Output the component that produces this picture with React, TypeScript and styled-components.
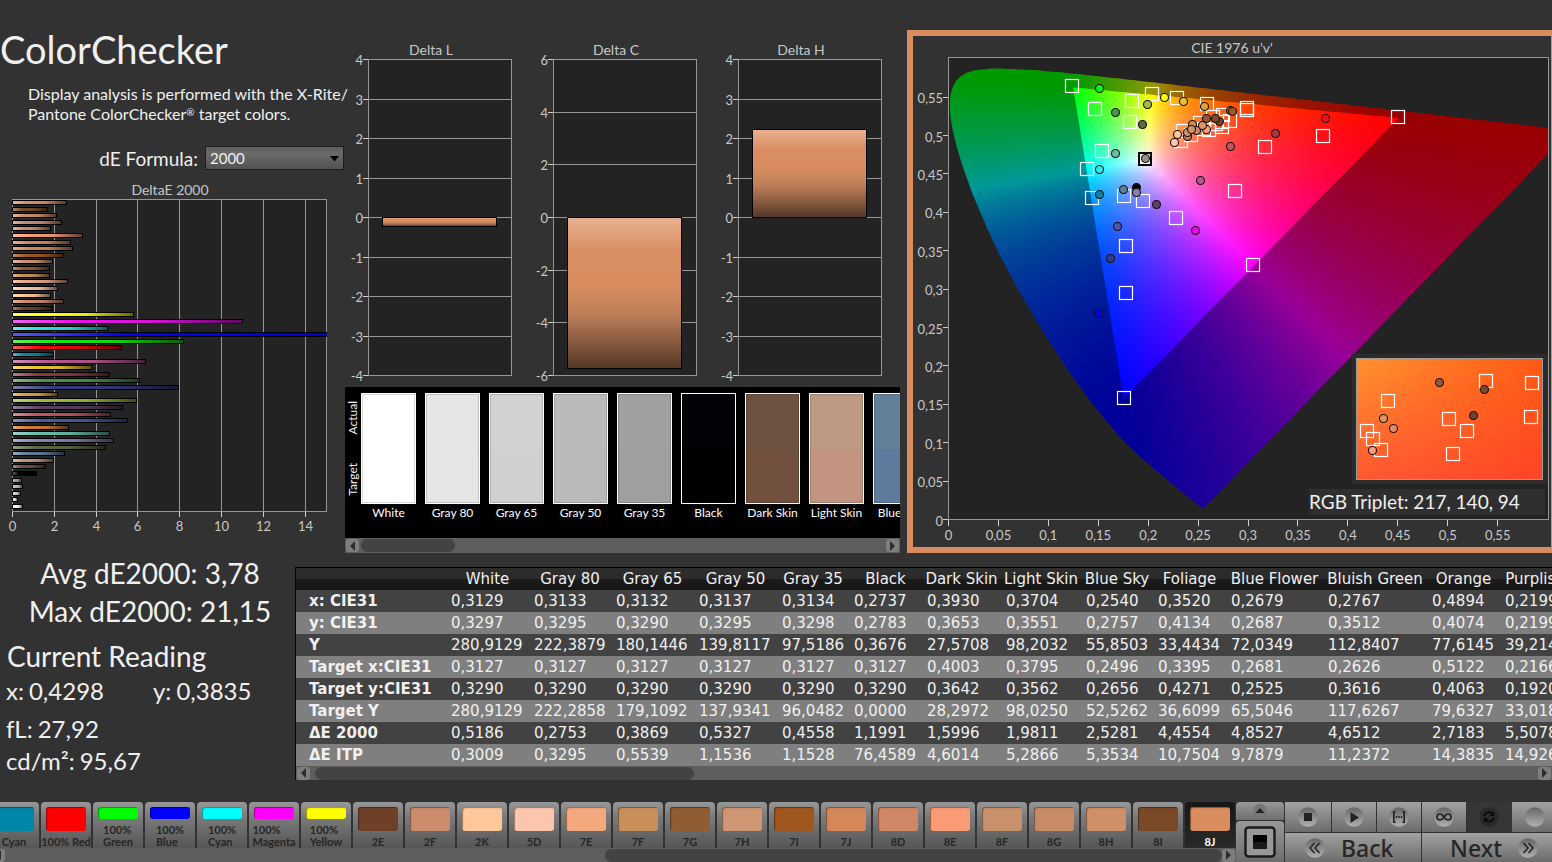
import React from 'react';
import styled, { createGlobalStyle, css } from 'styled-components';

const Global = createGlobalStyle`
  * { box-sizing: border-box; }
  body { margin: 0; background: #323232; color: #f0f0f0; font-family: Lato, "Open Sans", sans-serif; overflow: hidden; }
  h1, h2, p { margin: 0; font-weight: 400; }
  button { font-family: inherit; border: 0; padding: 0; margin: 0; }
`;

/* ---------- colour helpers ---------- */

const clamp = (n: number) => Math.max(0, Math.min(255, Math.round(n)));
const parse = (hex: string) => [1, 3, 5].map((i) => parseInt(hex.slice(i, i + 2), 16));
const mix = (hex: string, to: number, amount: number) =>
  `rgb(${parse(hex).map((c) => clamp(c + (to - c) * amount)).join(',')})`;

/* ---------- page layout ---------- */

const Page = styled.div`
  display: flex;
  flex-direction: column;
  min-height: 100vh;
  overflow: hidden;
`;

const Upper = styled.section`
  display: grid;
  grid-template-columns: 345px 555px minmax(0, 1fr);
  height: 553px;
`;

const Lower = styled.section`
  display: grid;
  grid-template-columns: 295px minmax(0, 1fr);
  flex: 1 0 auto;
`;

const Summary = styled.div`
  display: flex;
  flex-direction: column;
  padding-top: 26px;
`;

const Title = styled.h1`
  font-size: 38px;
  line-height: 46px;
  white-space: nowrap;
`;

const Description = styled.p`
  padding: 12px 0 0 28px;
  font-size: 16px;
  line-height: 20px;
  white-space: nowrap;
  sup { font-size: 10px; line-height: 0; vertical-align: 4px; }
`;

const FormulaRow = styled.div`
  display: flex;
  align-items: center;
  justify-content: flex-end;
  gap: 7px;
  height: 24px;
  margin: 22px 1px 0 0;
  label { font-size: 19px; }
`;

const SelectWrap = styled.div`
  position: relative;
  svg { position: absolute; right: 5px; top: 10px; pointer-events: none; }
`;

const FormulaSelect = styled.select`
  appearance: none;
  display: block;
  width: 139px;
  height: 24px;
  padding: 0 4px;
  border: 1px solid #1d1d1d;
  border-radius: 0;
  background: linear-gradient(#5e5e5e, #6a6a6a 30%, #525252);
  color: #f0f0f0;
  font: 15px Lato, sans-serif;
`;

const Middle = styled.div`
  display: flex;
  flex-direction: column;
  padding-top: 30px;
`;

const DeltaRow = styled.div`
  display: flex;
  height: 357px;
`;

const ChartSvg = styled.svg`
  display: block;
  overflow: hidden;
  text { fill: #c8c8c8; font-family: Lato, sans-serif; font-size: 13px; }
  .title { font-size: 14px; }
`;

/* ---------- delta E bar chart ---------- */

const deBars: [number, string][] = [
  [67, '#d98c6a'], [48, '#7a4a26'], [57, '#cf8f68'], [62, '#c48c76'], [51, '#c9906c'],
  [83, '#fa9b76'], [71, '#d08768'], [73, '#d6875a'], [64, '#a0561f'], [53, '#cf9673'],
  [50, '#8f5c34'], [50, '#c88f5a'], [68, '#e8a684'], [58, '#fcc6ac'], [51, '#ffc79a'],
  [64, '#cc8b6a'], [53, '#6e4028'], [134, '#ffff10'], [243, '#f010f0'], [108, '#30e0e0'],
  [454, '#0000ee'], [184, '#10e810'], [122, '#f00808'], [54, '#0a86a4'], [146, '#bb5595'],
  [92, '#ebc82e'], [110, '#8c3840'], [140, '#4a944a'], [179, '#343c80'], [58, '#e2a038'],
  [137, '#9fb840'], [123, '#5b3f68'], [111, '#c25464'], [128, '#4a5ba0'], [69, '#d87c34'],
  [110, '#66bfac'], [114, '#8583b1'], [106, '#5a6b42'], [65, '#5f7e9f'], [54, '#c49480'],
  [46, '#70503f'], [37, '#000000'], [22, '#a0a0a0'], [23, '#bababa'], [21, '#d0d0d0'],
  [18, '#e6e6e6'], [23, '#ffffff'],
];

function DeltaEChart() {
  const ticks = [0, 2, 4, 6, 8, 10, 12, 14];
  const px = (v: number) => Math.round(12 + v * 20.9) + 0.5;
  return (
    <ChartSvg width="345" height="370" viewBox="0 170 345 370">
      <defs>
        {deBars.map(([, c], i) => (
          <linearGradient id={`de${i}`} key={i}>
            <stop offset="0" stopColor={mix(c, 255, 0.35)} />
            <stop offset="0.25" stopColor={c} />
            <stop offset="0.6" stopColor={mix(c, 0, 0.08)} />
            <stop offset="1" stopColor={mix(c, 0, 0.6)} />
          </linearGradient>
        ))}
        <clipPath id="deClip"><rect x="12" y="199" width="315" height="312" /></clipPath>
      </defs>
      <text className="title" x="170" y="195" textAnchor="middle">DeltaE 2000</text>
      <rect x="12.5" y="199.5" width="314" height="312" fill="#232323" stroke="#969696" />
      {ticks.map((t) => (
        <g key={t}>
          <path d={`M${px(t)} 200V511`} stroke="#969696" />
          <path d={`M${px(t)} 512v5`} stroke="#d0d0d0" />
          <text x={px(t)} y="531" textAnchor="middle">{t}</text>
        </g>
      ))}
      <g clipPath="url(#deClip)" shapeRendering="crispEdges">
        {deBars.map(([end, ], i) => {
          const y = Math.round(200 + i * 6.61);
          return (
            <g key={i}>
              <rect x="12" y={y} width={end - 12} height="5" fill="#000" />
              <rect x="13" y={y + 1} width={end - 14} height="3" fill={`url(#de${i})`} />
            </g>
          );
        })}
      </g>
    </ChartSvg>
  );
}

/* ---------- delta L / C / H charts ---------- */

interface DeltaProps { name: string; max: number; step: number; top: number; bottom: number }

function DeltaChart({ name, max, step, top, bottom }: DeltaProps) {
  const values: number[] = [];
  for (let v = max; v >= -max; v -= step) values.push(v);
  const y = (v: number) => Math.round(217 - (v / max) * 158) + 0.5;
  const id = `delta${name}`;
  return (
    <ChartSvg width="185" height="357" viewBox="0 30 185 357">
      <defs>
        <linearGradient id={id} x2="0" y2="1">
          <stop offset="0" stopColor="#e8b292" />
          <stop offset="0.22" stopColor="#d98e62" />
          <stop offset="0.45" stopColor="#d88c5e" />
          <stop offset="0.65" stopColor="#bb7d58" />
          <stop offset="1" stopColor="#543626" />
        </linearGradient>
      </defs>
      <text className="title" x="86" y="55" textAnchor="middle">Delta {name}</text>
      <rect x="23.5" y="59.5" width="143" height="316" fill="#232323" />
      {values.map((v) => (
        <g key={v}>
          <path d={`M24 ${y(v)}H166`} stroke="#969696" />
          <path d={`M18 ${y(v)}h5`} stroke="#d0d0d0" />
          <text x="18" y={y(v) + 5} textAnchor="end">{v}</text>
        </g>
      ))}
      <rect x="23.5" y="59.5" width="143" height="316" fill="none" stroke="#969696" />
      <rect x="37.5" y={top + 0.5} width="114" height={bottom - top} fill={`url(#${id})`} stroke="#000" />
    </ChartSvg>
  );
}

/* ---------- swatch comparison strip ---------- */

const swatches = [
  ['White', '#ffffff', '#ffffff'], ['Gray 80', '#e6e5e6', '#e6e6e6'], ['Gray 65', '#d2d0d1', '#d0d0d0'],
  ['Gray 50', '#bcb9ba', '#bababa'], ['Gray 35', '#a0a0a0', '#9f9f9f'], ['Black', '#030307', '#000000'],
  ['Dark Skin', '#6e5241', '#725040'], ['Light Skin', '#bd9983', '#c39581'], ['Blue Sky', '#62809a', '#5e7a9c'],
];

const Compare = styled.div`
  display: flex;
  flex: 1;
  min-height: 0;
  overflow: hidden;
  background: #000;
`;

const SideLabels = styled.div`
  display: flex;
  flex-direction: column;
  justify-content: space-around;
  align-items: center;
  flex: 0 0 16px;
  height: 123px;
  font-size: 12px;
  span { writing-mode: vertical-rl; transform: rotate(180deg); line-height: 16px; }
`;

const SwatchList = styled.div`
  display: flex;
  gap: 9px;
  padding-top: 6px;
`;

const SwatchItem = styled.figure`
  flex: 0 0 55px;
  margin: 0;
  text-align: center;
  font-size: 12px;
  line-height: 18px;
  color: #fff;
  white-space: nowrap;
`;

const SwatchTile = styled.div<{ $actual: string; $target: string }>`
  height: 111px;
  border: 1px solid #fff;
  background: linear-gradient(${(p) => p.$actual} 50%, ${(p) => p.$target} 50%);
  box-shadow: inset 0 0 0 1px rgba(0, 0, 0, 0.15);
`;

/* ---------- scroll bars ---------- */

const ScrollTrack = styled.div<{ $h: number }>`
  display: flex;
  align-items: center;
  flex: 0 0 ${(p) => p.$h}px;
  height: ${(p) => p.$h}px;
  padding: 0 1px;
  background: #5e5e5e;
`;

const ScrollArrow = styled.button`
  display: flex;
  align-items: center;
  justify-content: center;
  flex: 0 0 13px;
  height: 13px;
  border-radius: 3px;
  background: #7e7e7e;
`;

const ScrollThumb = styled.div<{ $w: number; $lead?: number }>`
  flex: 0 1 ${(p) => p.$w}px;
  height: 13px;
  margin-left: ${(p) => p.$lead ?? 2}px;
  margin-right: auto;
  border-radius: 7px;
  background: #434343;
`;

const Arrow = ({ right }: { right?: boolean }) => (
  <ScrollArrow aria-label={right ? 'Scroll right' : 'Scroll left'}>
    <svg width="7" height="10" viewBox="0 0 7 10">
      <path d={right ? 'M1 0v10l5-5z' : 'M6 0v10l-5-5z'} fill="#2c2c2c" />
    </svg>
  </ScrollArrow>
);

function ScrollBar({ h, w, lead }: { h: number; w: number; lead?: number }) {
  return (
    <ScrollTrack $h={h}>
      <Arrow />
      <ScrollThumb $w={w} $lead={lead} />
      <Arrow right />
    </ScrollTrack>
  );
}

/* ---------- CIE 1976 chart ---------- */

const CiePanel = styled.div`
  margin: 30px 0 0 7px;
  border: 6px solid #d98c5e;
  border-right-width: 1px;
  overflow: hidden;
`;

const CieSvg = styled.svg`
  display: block;
  width: 100%;
  height: 511px;
  text { fill: #c8c8c8; font-family: Lato, sans-serif; font-size: 13px; }
  .title { font-size: 14px; }
  .triplet { fill: #f0f0f0; font-size: 19px; }
`;

const cx = (u: number) => 948.5 + u * 998.5;
const cy = (v: number) => 519.5 - v * 768;

const locusXy = [
  [0.1741, 0.005], [0.1714, 0.0051], [0.1644, 0.0109], [0.1566, 0.0177], [0.144, 0.0297],
  [0.1355, 0.0399], [0.1241, 0.0578], [0.1096, 0.0868], [0.0913, 0.1327], [0.0687, 0.2007],
  [0.0454, 0.295], [0.0235, 0.4127], [0.0082, 0.5384], [0.0039, 0.6548], [0.0139, 0.7502],
  [0.0389, 0.812], [0.0743, 0.8338], [0.1142, 0.8262], [0.1547, 0.8059], [0.2296, 0.7543],
  [0.3016, 0.6923], [0.3731, 0.6245], [0.4441, 0.5547], [0.5125, 0.4866], [0.5752, 0.4242],
  [0.627, 0.3725], [0.6915, 0.3083], [0.719, 0.2809], [0.7347, 0.2653],
];

const locusPath = (() => {
  const p = locusXy.map(([x, y]) => {
    const d = -2 * x + 12 * y + 3;
    return [cx((4 * x) / d), cy((9 * y) / d)];
  });
  let d = `M${p[0]}`;
  for (let i = 0; i < p.length - 1; i++) {
    const a = p[Math.max(0, i - 1)], b = p[i], c = p[i + 1], e = p[Math.min(p.length - 1, i + 2)];
    d += `C${b[0] + (c[0] - a[0]) / 6} ${b[1] + (c[1] - a[1]) / 6} ${c[0] - (e[0] - b[0]) / 6} ${c[1] - (e[1] - b[1]) / 6} ${c[0]} ${c[1]}`;
  }
  return `${d}Z`;
})();

/* Brightest displayable colour of a chromaticity, scaled by the given level. */
function chroma(px: number, py: number, level: number) {
  const u = (px - 948.5) / 998.5;
  const v = Math.max(0.01, (519.5 - py) / 768);
  const X = (9 * u) / (4 * v);
  const Z = (12 - 3 * u - 20 * v) / (4 * v);
  const lin = [
    3.2406 * X - 1.5372 - 0.4986 * Z,
    -0.9689 * X + 1.8758 + 0.0415 * Z,
    0.0557 * X - 0.204 + 1.057 * Z,
  ].map((c) => Math.max(0, c));
  const top = Math.max(...lin, 0.0001);
  return `rgb(${lin.map((c) => clamp((255 * level * c) / top)).join(',')})`;
}

function ColourField({ id, x0, x1, y0, y1, level }: { id: string; x0: number; x1: number; y0: number; y1: number; level: number }) {
  const strips = [];
  const n = Math.ceil((x1 - x0) / 10);
  for (let y = y0; y < y1; y += 2) {
    const stops = [];
    for (let i = 0; i <= n; i++) {
      stops.push(<stop key={i} offset={i / n} stopColor={chroma(x0 + ((x1 - x0) * i) / n, y + 1, level)} />);
    }
    strips.push(
      <g key={y}>
        <linearGradient id={`${id}${y}`}>{stops}</linearGradient>
        <rect x={x0} y={y} width={x1 - x0} height="3" fill={`url(#${id}${y})`} />
      </g>,
    );
  }
  return <g shapeRendering="crispEdges">{strips}</g>;
}

const targets = [
  [1072, 86], [1095, 109], [1132, 101], [1152, 94], [1177, 98], [1207, 104], [1130, 122], [1102, 151],
  [1087, 169], [1092, 198], [1124, 196], [1143, 201], [1176, 218], [1126, 246], [1126, 293], [1183, 131],
  [1181, 141], [1191, 135], [1200, 123], [1204, 129], [1213, 117], [1223, 115], [1209, 130], [1222, 127],
  [1222, 122], [1230, 121], [1216, 124], [1235, 191], [1247, 108], [1247, 110], [1265, 147], [1323, 136],
  [1398, 117], [1253, 265], [1124, 398],
];

const readings: [number, number, string][] = [
  [1099, 88, '#00f818'], [1115, 112, '#469449'], [1147, 104, '#9fbd40'], [1164, 97, '#ffff00'],
  [1183, 101, '#e8c22e'], [1204, 106, '#e2a02e'], [1142, 124, '#5a6b42'], [1115, 153, '#66bfac'],
  [1099, 169, '#20f0f0'], [1099, 194, '#0086a8'], [1123, 189, '#5f7e9f'], [1136, 187, '#000000'],
  [1136, 192, '#8583b1'], [1156, 204, '#5b3f68'], [1117, 226, '#4a5ba5'], [1110, 258, '#313b91'],
  [1098, 313, '#0000f0'], [1195, 230, '#f000f0'], [1200, 180, '#bb5295'], [1230, 146, '#c25462'],
  [1275, 133, '#a83840'], [1325, 118, '#f01010'], [1177, 134, '#ffc79a'], [1174, 142, '#ffc8b0'],
  [1187, 136, '#b98060'], [1187, 132, '#cf9673'], [1192, 124, '#c88f5a'], [1196, 130, '#c78b68'],
  [1191, 129, '#d0946c'], [1206, 129, '#f9a37e'], [1202, 125, '#e09468'], [1206, 118, '#8f5a34'],
  [1219, 121, '#6f432a'], [1215, 118, '#7a4a28'], [1230, 110, '#b0602c'], [1232, 111, '#a0561f'],
];

const insetTargets = [
  [1486, 381], [1532, 383], [1388, 401], [1449, 419], [1531, 417],
  [1467, 431], [1367, 431], [1373, 439], [1381, 450], [1453, 454],
];

const insetReadings: [number, number, string][] = [
  [1439, 382, '#8f5a34'], [1484, 389, '#7a4a28'], [1473, 415, '#6f432a'],
  [1383, 418, '#e0975f'], [1393, 428, '#e08e66'], [1372, 450, '#ff9f7d'],
];

const Target = ({ x, y, stroke = '#fff' }: { x: number; y: number; stroke?: string }) => (
  <rect x={x - 6.5} y={y - 6.5} width="13" height="13" fill="none" stroke={stroke} strokeWidth="1.2" />
);

const Reading = ({ x, y, fill }: { x: number; y: number; fill: string }) => (
  <circle cx={x + 0.5} cy={y + 0.5} r="4" fill={fill} stroke="#1c0c08" strokeWidth="1.1" />
);

const fmt = (n: number) => String(Math.round(n * 100) / 100).replace('.', ',');

function CieChart() {
  const steps = Array.from({ length: 12 }, (_, i) => i * 0.05);
  return (
    <CieSvg viewBox="913 36 638 511" preserveAspectRatio="xMinYMin meet">
      <defs>
        <clipPath id="plot"><rect x="949" y="58" width="599" height="462" /></clipPath>
        <clipPath id="locus" clipPath="url(#plot)"><path d={locusPath} /></clipPath>
        <clipPath id="gamut">
          <path d={`M${cx(0.4507)} ${cy(0.5229)}L${cx(0.125)} ${cy(0.5625)}L${cx(0.1754)} ${cy(0.1579)}Z`} />
        </clipPath>
        <linearGradient id="insetX">
          <stop offset="0" stopColor="#ff9232" />
          <stop offset="1" stopColor="#ff5a14" />
        </linearGradient>
        <linearGradient id="insetY" x2="0" y2="1">
          <stop offset="0" stopColor="#ff3c28" stopOpacity="0" />
          <stop offset="1" stopColor="#ff3832" stopOpacity="0.65" />
        </linearGradient>
      </defs>
      <text className="title" x="1232" y="53" textAnchor="middle">CIE 1976 u'v'</text>
      <rect x="948.5" y="57.5" width="600" height="462" fill="#232323" />
      <g clipPath="url(#locus)">
        <ColourField id="out" x0={948} x1={1548} y0={66} y1={512} level={0.6} />
      </g>
      <g clipPath="url(#gamut)">
        <ColourField id="in" x0={1070} x1={1400} y0={84} y1={402} level={1} />
      </g>
      <rect x="948.5" y="57.5" width="600" height="462" fill="none" stroke="#969696" />
      {steps.map((s) => (
        <g key={s}>
          <path d={`M${Math.round(cx(s) - 0.5) + 0.5} 520v6`} stroke="#d0d0d0" />
          <text x={cx(s)} y="540" textAnchor="middle">{fmt(s)}</text>
          <path d={`M943 ${Math.round(cy(s) - 0.5) + 0.5}h5`} stroke="#d0d0d0" />
          <text x="943" y={Math.round(cy(s)) + 6} textAnchor="end">{fmt(s)}</text>
        </g>
      ))}
      {targets.map(([x, y], i) => <Target key={i} x={x} y={y} />)}
      <rect x="1139" y="153" width="12" height="12" fill="none" stroke="#000" strokeWidth="2" />
      <rect x="1141" y="155" width="8" height="8" fill="none" stroke="#fff" />
      {readings.map(([x, y, c], i) => <Reading key={i} x={x} y={y} fill={c} />)}
      <Reading x={1145} y={158} fill="#8f8f8f" />

      <rect x="1352" y="354" width="196" height="130" fill="#2c2c2c" />
      <rect x="1356.5" y="358.5" width="186" height="121" fill="url(#insetX)" />
      <rect x="1356.5" y="358.5" width="186" height="121" fill="url(#insetY)" stroke="#a09a96" />
      {insetTargets.map(([x, y], i) => <Target key={i} x={x} y={y} />)}
      {insetReadings.map(([x, y, c], i) => <Reading key={i} x={x} y={y} fill={c} />)}
      <rect x="1309" y="489" width="236" height="26" fill="#2f2f2f" />
      <text className="triplet" x="1309" y="509">RGB Triplet: 217, 140, 94</text>
    </CieSvg>
  );
}

/* ---------- current reading ---------- */

const Readout = styled.div`
  display: flex;
  flex-direction: column;
  white-space: nowrap;
`;

const Totals = styled.div`
  padding: 1px 0 0 5px;
  text-align: center;
  font-size: 28px;
  line-height: 38px;
`;

const ReadingTitle = styled.h2`
  padding: 7px 0 0 7px;
  font-size: 28px;
  line-height: 38px;
`;

const ReadingLines = styled.dl`
  display: grid;
  grid-template-columns: 147px 1fr;
  margin: 0;
  padding: 0 0 0 6px;
  font-size: 24px;
  line-height: 32px;
  div { display: flex; gap: 5px; }
  div:nth-child(n + 3) { grid-column: 1 / -1; }
  div:nth-child(3) { padding-top: 6px; }
  dt, dd { margin: 0; }
`;

/* ---------- data table ---------- */

const columns: [string, number, string[]][] = [
  ['White', 83, ['0,3129', '0,3297', '280,9129', '0,3127', '0,3290', '280,9129', '0,5186', '0,3009']],
  ['Gray 80', 82, ['0,3133', '0,3295', '222,3879', '0,3127', '0,3290', '222,2858', '0,2753', '0,3295']],
  ['Gray 65', 83, ['0,3132', '0,3290', '180,1446', '0,3127', '0,3290', '179,1092', '0,3869', '0,5539']],
  ['Gray 50', 83, ['0,3137', '0,3295', '139,8117', '0,3127', '0,3290', '137,9341', '0,5327', '1,1536']],
  ['Gray 35', 72, ['0,3134', '0,3298', '97,5186', '0,3127', '0,3290', '96,0482', '0,4558', '1,1528']],
  ['Black', 73, ['0,2737', '0,2783', '0,3676', '0,3127', '0,3290', '0,0000', '1,1991', '76,4589']],
  ['Dark Skin', 79, ['0,3930', '0,3653', '27,5708', '0,4003', '0,3642', '28,2972', '1,5996', '4,6014']],
  ['Light Skin', 80, ['0,3704', '0,3551', '98,2032', '0,3795', '0,3562', '98,0250', '1,9811', '5,2866']],
  ['Blue Sky', 72, ['0,2540', '0,2757', '55,8503', '0,2496', '0,2656', '52,5262', '2,5281', '5,3534']],
  ['Foliage', 73, ['0,3520', '0,4134', '33,4434', '0,3395', '0,4271', '36,6099', '4,4554', '10,7504']],
  ['Blue Flower', 97, ['0,2679', '0,2687', '72,0349', '0,2681', '0,2525', '65,5046', '4,8527', '9,7879']],
  ['Bluish Green', 104, ['0,2767', '0,3512', '112,8407', '0,2626', '0,3616', '117,6267', '4,6512', '11,2372']],
  ['Orange', 73, ['0,4894', '0,4074', '77,6145', '0,5122', '0,4063', '79,6327', '2,7183', '14,3835']],
  ['Purplish Blue', 108, ['0,2199', '0,2199', '39,2144', '0,2166', '0,1920', '33,0180', '5,5078', '14,9260']],
];

const rowNames = ['x: CIE31', 'y: CIE31', 'Y', 'Target x:CIE31', 'Target y:CIE31', 'Target Y', 'ΔE 2000', 'ΔE ITP'];

const TableFrame = styled.div`
  align-self: start;
  margin-top: 14px;
  border-top: 1px solid #000;
  border-left: 1px solid #000;
  overflow: hidden;
`;

const DataTable = styled.table`
  table-layout: fixed;
  width: 1312px;
  border-collapse: collapse;
  font-family: "DejaVu Sans", sans-serif;
  font-size: 15px;
  white-space: nowrap;
  thead tr { background: linear-gradient(#2e2e2e, #2a2a2a 50%, #1c1c1c 50%, #141414); }
  th, td { padding: 0 5px; height: 22px; line-height: 20px; text-align: left; font-weight: 400; }
  thead th { padding: 0; text-align: center; }
  tbody th { padding-left: 13px; font-weight: 700; }
  tbody tr { background: #424242; }
  tbody tr:nth-child(even) { background: #7f7f7f; }
`;

/* ---------- bottom bar ---------- */

const BottomBar = styled.footer`
  display: flex;
  height: 60px;
  overflow: hidden;
`;

const StripArea = styled.div`
  display: flex;
  flex-direction: column;
  flex: 1;
  min-width: 0;
  overflow: hidden;
`;

const Strip = styled.div`
  display: flex;
  justify-content: flex-end;
  gap: 2px;
  height: 48px;
  padding-right: 1px;
`;

const StripScroll = styled.div`
  margin-left: -9px;
`;

const PatchButton = styled.button<{ $active?: boolean }>`
  display: flex;
  flex-direction: column;
  align-items: center;
  flex: 0 0 50px;
  padding-top: 5px;
  border-radius: 4px 4px 0 0;
  background: linear-gradient(#989898, #7c7c7c 30%, #565656);
  color: #262626;
  font-size: 11px;
  font-weight: 700;
  line-height: 12px;
  white-space: nowrap;
  ${(p) => p.$active && css`background: linear-gradient(#161616, #2a2a2a); color: #fff;`}
`;

const PatchColour = styled.span<{ $c: string; $small: boolean }>`
  flex: 0 0 auto;
  width: 40px;
  height: ${(p) => (p.$small ? 12 : 24)}px;
  margin-bottom: 5px;
  border-radius: 3px;
  background: ${(p) => p.$c};
  box-shadow: inset 1px 1px 1px rgba(0, 0, 0, 0.4);
`;

const patches: [string, string, string?][] = [
  ['Cyan', '#0086a8'], ['100% Red', '#ff0000'], ['100%', '#00ff00', 'Green'], ['100%', '#0000ff', 'Blue'],
  ['100%', '#00ffff', 'Cyan'], ['100%', '#ff00ff', 'Magenta'], ['100%', '#ffff00', 'Yellow'],
  ['2E', '#6e4028'], ['2F', '#cc8b6a'], ['2K', '#ffc79a'], ['5D', '#fcc6ac'], ['7E', '#f4a87e'],
  ['7F', '#c88f5a'], ['7G', '#8f5c34'], ['7H', '#cf9673'], ['7I', '#a0561f'], ['7J', '#d6875a'],
  ['8D', '#d08768'], ['8E', '#fa9b76'], ['8F', '#c9906c'], ['8G', '#c88b68'], ['8H', '#cf8f68'],
  ['8I', '#7a4a26'], ['8J', '#d98c5e'],
];

const PatchText = styled.span`
  text-align: left;
`;

const StopColumn = styled.div`
  display: flex;
  flex-direction: column;
  flex: 0 0 49px;
  padding-right: 1px;
  gap: 1px;
`;

const SmallButton = styled.button<{ $h: number }>`
  display: flex;
  align-items: center;
  justify-content: center;
  height: ${(p) => p.$h}px;
  border-radius: 4px 4px 0 0;
  background: linear-gradient(#989898, #6e6e6e);
`;

const Transport = styled.div`
  display: flex;
  flex-direction: column;
  flex: 0 0 267px;
  gap: 1px;
  overflow: hidden;
`;

const TransportRow = styled.div`
  display: flex;
  gap: 1px;
`;

const TransportButton = styled.button<{ $w: number; $on?: boolean; $side?: 'start' | 'end' }>`
  display: flex;
  align-items: center;
  justify-content: ${(p) => (p.$side ? `flex-${p.$side}` : 'center')};
  gap: 16px;
  flex: 0 0 ${(p) => p.$w}px;
  height: ${(p) => (p.$side ? 29 : 30)}px;
  padding: 0 ${(p) => (p.$side ? 20 : 0)}px;
  background: ${(p) => (p.$on ? '#363636' : 'linear-gradient(#a2a2a2, #6c6c6c)')};
  color: #262626;
  font-family: "Noto Sans", sans-serif;
  font-size: 23px;
  font-weight: 500;
  line-height: 28px;
`;

const Disc = ({ children, dark }: { children?: React.ReactNode; dark?: boolean }) => (
  <svg width="20" height="20" viewBox="0 0 20 20" fill="none" stroke="#222" strokeWidth="2">
    <defs>
      <linearGradient id="disc" x2="0" y2="1">
        <stop offset="0" stopColor="#666" />
        <stop offset="1" stopColor="#b0b0b0" />
      </linearGradient>
    </defs>
    <circle cx="10" cy="10" r="9.8" fill={dark ? '#2a2a2a' : 'url(#disc)'} stroke="none" />
    {children}
  </svg>
);

function Toolbar() {
  return (
    <BottomBar>
      <StripArea>
        <Strip>
          {patches.map(([label, colour, second], i) => (
            <PatchButton key={i} $active={label === '8J'}>
              <PatchColour $c={colour} $small={!!second} />
              <PatchText>{label}{second && <><br />{second}</>}</PatchText>
            </PatchButton>
          ))}
        </Strip>
        <StripScroll><ScrollBar h={14} w={617} lead={600} /></StripScroll>
      </StripArea>
      <StopColumn>
        <SmallButton $h={18} aria-label="Show more">
          <svg width="16" height="16" viewBox="0 0 16 16">
            <circle cx="8" cy="8" r="7" fill="#777" />
            <path d="M3.500 10L8 5l4.500 5z" fill="#222" />
          </svg>
        </SmallButton>
        <SmallButton $h={41} aria-label="Window">
          <svg width="32" height="32" viewBox="0 0 32 32">
            <rect x="1.500" y="1.500" width="29" height="29" rx="3" fill="#989898" stroke="#1c1c1c" strokeWidth="2.500" />
            <rect x="9" y="9" width="14" height="14" fill="#000" />
            <path d="M9 16h14v7H9z" fill="#1a1a1a" />
          </svg>
        </SmallButton>
      </StopColumn>
      <Transport>
        <TransportRow>
          <TransportButton $w={46} aria-label="Stop"><Disc><path d="M6 6h8v8H6z" fill="#222" stroke="none" /></Disc></TransportButton>
          <TransportButton $w={44} aria-label="Play"><Disc><path d="M6.500 5v11l8.500-5.500z" fill="#222" stroke="none" /></Disc></TransportButton>
          <TransportButton $w={44} aria-label="Range">
            <Disc><path d="M6.500 4.800H4.800v10.400h1.700M13.500 4.800h1.700v10.400h-1.700" strokeWidth="1.600" /><path d="M6.800 10h1.400M9.300 10h1.400M11.800 10h1.400" /></Disc>
          </TransportButton>
          <TransportButton $w={44} aria-label="Continuous">
            <Disc><path d="M10 10C8.500 7.500 7.200 7 6 7a3 3 0 0 0 0 6c1.200 0 2.500-.5 4-3s2.800-3 4-3a3 3 0 0 1 0 6c-1.200 0-2.500-.5-4-3z" strokeWidth="1.600" /></Disc>
          </TransportButton>
          <TransportButton $w={44} $on aria-label="Refresh">
            <Disc dark><path d="M5 9.500a5 5 0 0 1 9-2M15 10.500a5 5 0 0 1-9 2" stroke="#0c0c0c" /><path d="M15.500 4v5h-5zM4.500 16v-5h5z" fill="#0c0c0c" stroke="none" /></Disc>
          </TransportButton>
          <TransportButton $w={46} aria-label="Record"><Disc /></TransportButton>
        </TransportRow>
        <TransportRow>
          <TransportButton $w={136} $side="start">
            <Disc><path d="M9.500 5l-4.500 5 4.500 5M14.500 5L10 10l4.500 5" strokeWidth="1.500" /></Disc>
            Back
          </TransportButton>
          <TransportButton $w={136} $side="end">
            Next
            <Disc><path d="M5.500 5l4.500 5-4.500 5M10.500 5l4.500 5-4.500 5" strokeWidth="1.500" /></Disc>
          </TransportButton>
        </TransportRow>
      </Transport>
    </BottomBar>
  );
}

export default function App() {
  return (
    <Page>
      <Global />
      <Upper>
        <Summary>
          <Title>ColorChecker</Title>
          <Description>
            Display analysis is performed with the X-Rite/<br />
            Pantone ColorChecker<sup>®</sup> target colors.
          </Description>
          <FormulaRow>
            <label htmlFor="formula">dE Formula:</label>
            <SelectWrap>
              <FormulaSelect id="formula" defaultValue="2000"><option>2000</option></FormulaSelect>
              <svg width="9" height="6" viewBox="0 0 9 6"><path d="M0 0h9L4.500 5.500z" fill="#000" /></svg>
            </SelectWrap>
          </FormulaRow>
          <DeltaEChart />
        </Summary>
        <Middle>
          <DeltaRow>
            <DeltaChart name="L" max={4} step={1} top={217} bottom={226} />
            <DeltaChart name="C" max={6} step={2} top={217} bottom={368} />
            <DeltaChart name="H" max={4} step={1} top={129} bottom={217} />
          </DeltaRow>
          <Compare>
            <SideLabels><span>Actual</span><span>Target</span></SideLabels>
            <SwatchList>
              {swatches.map(([name, actual, target]) => (
                <SwatchItem key={name}>
                  <SwatchTile $actual={actual} $target={target} />
                  <figcaption>{name}</figcaption>
                </SwatchItem>
              ))}
            </SwatchList>
          </Compare>
          <ScrollBar h={15} w={94} />
        </Middle>
        <CiePanel><CieChart /></CiePanel>
      </Upper>
      <Lower>
        <Readout>
          <Totals>
            <p>Avg dE2000: 3,78</p>
            <p>Max dE2000: 21,15</p>
          </Totals>
          <ReadingTitle>Current Reading</ReadingTitle>
          <ReadingLines>
            <div><dt>x:</dt><dd>0,4298</dd></div>
            <div><dt>y:</dt><dd>0,3835</dd></div>
            <div><dt>fL:</dt><dd>27,92</dd></div>
            <div><dt>cd/m²:</dt><dd>95,67</dd></div>
          </ReadingLines>
        </Readout>
        <TableFrame>
          <DataTable>
            <colgroup>
              <col style={{ width: 150 }} />
              {columns.map(([name, w]) => <col key={name} style={{ width: w }} />)}
            </colgroup>
            <thead>
              <tr><td />{columns.map(([name]) => <th key={name} scope="col">{name}</th>)}</tr>
            </thead>
            <tbody>
              {rowNames.map((row, r) => (
                <tr key={row}>
                  <th scope="row">{row}</th>
                  {columns.map(([name, , values]) => <td key={name}>{values[r]}</td>)}
                </tr>
              ))}
            </tbody>
          </DataTable>
          <ScrollBar h={14} w={379} lead={5} />
        </TableFrame>
      </Lower>
      <Toolbar />
    </Page>
  );
}
